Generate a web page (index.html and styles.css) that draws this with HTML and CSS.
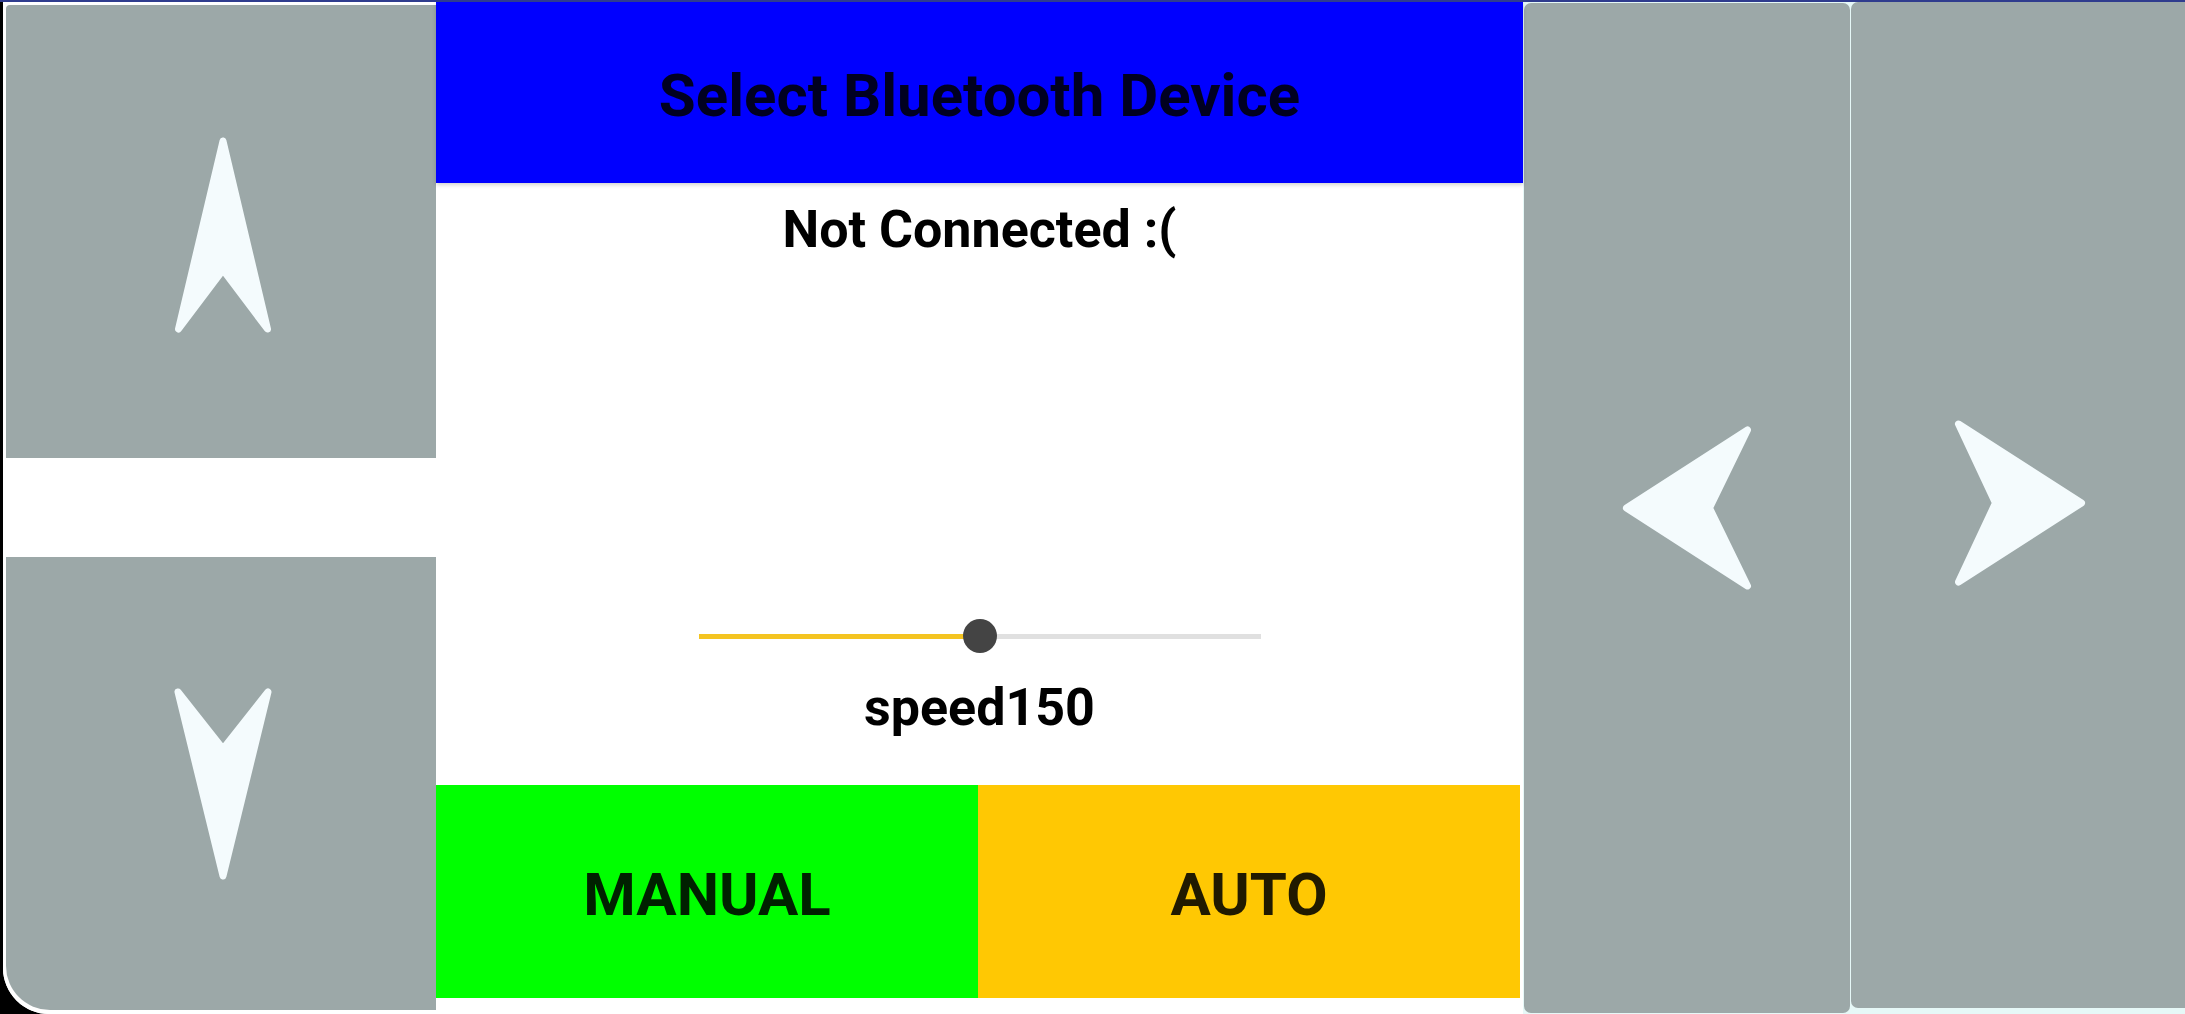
FILE: index.html
```html
<!DOCTYPE html>
<html lang="en">
<head>
<meta charset="utf-8">
<title>Bluetooth Car Controller</title>
<link rel="stylesheet" href="styles.css">
</head>
<body>
<div class="topline"></div>
<div class="screen">
  <div class="col-left">
    <div class="pad pad-up">
      <svg class="arrow" width="100" height="200" viewBox="0 0 100 200"><polygon points="50,6 94.5,194 50,135 5.5,194"/></svg>
    </div>
    <div class="pad pad-down">
      <svg class="arrow" width="100" height="200" viewBox="0 0 100 200"><polygon points="5,8 50,65 95,8 50,192"/></svg>
    </div>
  </div>
  <div class="col-center">
    <div class="title-bar">Select Bluetooth Device</div>
    <div class="status">Not Connected :(</div>
    <div class="slider">
      <div class="track"><div class="fill" style="width:50%"></div></div>
      <div class="thumb" style="left:50%"></div>
    </div>
    <div class="speed">speed150</div>
    <div class="modes">
      <div class="mode manual">MANUAL</div>
      <div class="mode auto">AUTO</div>
    </div>
  </div>
  <div class="col-right">
    <div class="pad pad-left">
      <svg class="arrow" width="130" height="170" viewBox="0 0 130 170"><polygon points="4.5,85 125.5,7 87.5,85 125.5,163"/></svg>
    </div>
    <div class="pad pad-right">
      <svg class="arrow" width="132" height="170" viewBox="0 0 132 170"><polygon points="4.5,6 127.5,85 4.5,164 41.5,85"/></svg>
    </div>
  </div>
</div>
</body>
</html>
```
FILE: styles.css
```css
html, body {
  margin: 0;
  padding: 0;
  background: #000;
  height: 1014px;
  overflow: hidden;
}

body {
  font-family: Roboto, "Noto Sans", "Liberation Sans", sans-serif;
}

.topline {
  height: 2px;
  background: #2f3c8e;
}

.screen {
  margin-left: 3px;
  height: 1012px;
  display: grid;
  grid-template-columns: 433px 1087px 1fr;
  background: #fff;
  border-bottom-left-radius: 46px;
  overflow: hidden;
}

/* directional pads */
.pad {
  background: #9ca8a8;
  display: flex;
  align-items: center;
  justify-content: center;
  box-sizing: border-box;
}

.arrow polygon {
  fill: #f4fbfd;
  stroke: #f4fbfd;
  stroke-width: 7;
  stroke-linejoin: round;
}

.col-left {
  display: flex;
  flex-direction: column;
  gap: 99px;
  padding: 3px 0 0 3px;
  background: #fff;
}

.pad-up {
  height: 453px;
  border-top-left-radius: 4px;
  padding: 7px 0 0 4px;
}

.pad-down {
  height: 453px;
  border-bottom-left-radius: 44px;
  padding-left: 4px;
}

.col-right {
  display: flex;
  gap: 1px;
  padding-left: 1px;
  background: #e6f8f7;
}

.pad-left {
  width: 326px;
  height: 1010px;
  margin-top: 1px;
  border-radius: 7px;
}

.pad-right {
  flex: 1;
  height: 1006px;
  border-radius: 7px 0 0 7px;
  padding: 0 0 4px 4px;
}

/* center column */
.col-center {
  display: flex;
  flex-direction: column;
  background: #fff;
}

.title-bar {
  height: 181px;
  box-sizing: border-box;
  padding-top: 6px;
  background: #0000ff;
  display: flex;
  align-items: center;
  justify-content: center;
  font-size: 60px;
  font-weight: 700;
  color: rgba(0, 0, 0, 0.87);
  box-shadow: 0 2px 4px rgba(0, 0, 0, 0.18);
  position: relative;
}

.status {
  margin-top: 16px;
  font-size: 52px;
  line-height: 61px;
  font-weight: 700;
  text-align: center;
  color: #000;
}

.slider {
  position: relative;
  width: 562px;
  height: 34px;
  margin: 359px auto 0;
  display: flex;
  align-items: center;
}

.track {
  width: 100%;
  height: 5px;
  background: #e0e0e0;
}

.fill {
  height: 100%;
  background: #f4c421;
}

.thumb {
  position: absolute;
  top: 0;
  width: 34px;
  height: 34px;
  margin-left: -17px;
  border-radius: 50%;
  background: #444;
}

.speed {
  margin-top: 24px;
  font-size: 52px;
  line-height: 61px;
  font-weight: 700;
  text-align: center;
  color: #000;
}

.modes {
  margin: 47px 3px 0 0;
  height: 213px;
  display: flex;
}

.mode {
  flex: 1;
  display: flex;
  align-items: center;
  justify-content: center;
  box-sizing: border-box;
  padding-top: 5px;
  font-size: 60px;
  font-weight: 700;
  color: rgba(0, 0, 0, 0.87);
}

.manual {
  background: #00ff00;
}

.auto {
  background: #ffc803;
}
```
